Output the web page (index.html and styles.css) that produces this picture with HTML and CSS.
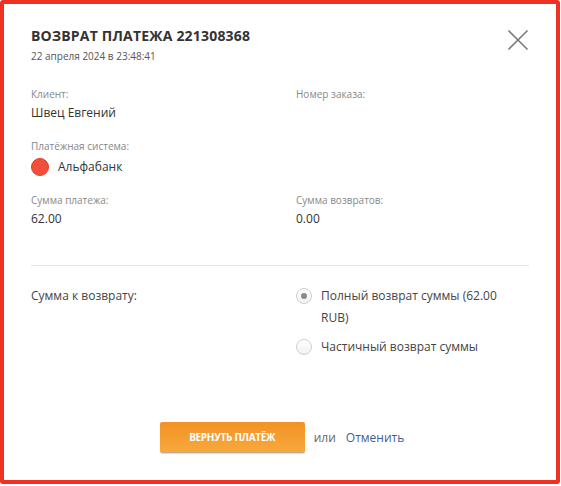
FILE: index.html
```html
<!DOCTYPE html>
<html lang="ru">
<head>
<meta charset="utf-8">
<title>Возврат платежа</title>
<link rel="stylesheet" href="styles.css">
</head>
<body>
<div class="modal">
  <div class="head">
    <div class="head-text">
      <h1 class="title">ВОЗВРАТ ПЛАТЕЖА 221308368</h1>
      <div class="date">22 апреля 2024 в 23:48:41</div>
    </div>
    <button class="close" aria-label="Закрыть">
      <svg width="22" height="22" viewBox="0 0 22 22"><path d="M1.5 1.5 L20.5 20.5 M20.5 1.5 L1.5 20.5" stroke="#7a7a7a" stroke-width="1.6" fill="none"/></svg>
    </button>
  </div>

  <div class="info">
    <div class="field">
      <div class="label">Клиент:</div>
      <div class="value">Швец Евгений</div>
    </div>
    <div class="field">
      <div class="label">Номер заказа:</div>
      <div class="value"></div>
    </div>
    <div class="field">
      <div class="label">Платёжная система:</div>
      <div class="value system"><span class="dot"></span>Альфабанк</div>
    </div>
    <div class="field"></div>
    <div class="field">
      <div class="label">Сумма платежа:</div>
      <div class="value">62.00</div>
    </div>
    <div class="field">
      <div class="label">Сумма возвратов:</div>
      <div class="value">0.00</div>
    </div>
  </div>

  <div class="divider"></div>

  <div class="refund">
    <div class="refund-label">Сумма к возврату:</div>
    <div class="options">
      <label class="option"><span class="radio checked"></span><span class="opt-text">Полный возврат суммы (62.00 RUB)</span></label>
      <label class="option"><span class="radio"></span><span class="opt-text">Частичный возврат суммы</span></label>
    </div>
  </div>

  <div class="actions">
    <button class="btn">ВЕРНУТЬ ПЛАТЁЖ</button>
    <span class="or">или</span>
    <a class="cancel" href="#">Отменить</a>
  </div>
</div>
</body>
</html>
```

FILE: styles.css
```css
* { box-sizing: border-box; }
html, body { margin: 0; padding: 0; background: #fff; }
body { font-family: "Open Sans", "Noto Sans", sans-serif; color: #333; }

.modal {
  width: 560px;
  height: 484px;
  border: 4px solid #ef3124;
  border-radius: 3px;
  padding: 23px 27px 0 27px;
  display: flex;
  flex-direction: column;
}

.head { display: flex; justify-content: space-between; align-items: flex-start; }
.title {
  margin: 0;
  font-size: 14px;
  line-height: 18px;
  font-weight: 700;
  color: #333;
  letter-spacing: 0.2px;
}
.date { font-size: 10px; line-height: 16px; color: #555; margin-top: 3px; }
.close {
  border: 0; background: none; padding: 0; margin: 2px 0 0 0;
  width: 22px; height: 22px; cursor: pointer;
}

.info {
  display: grid;
  grid-template-columns: 265px 1fr;
  row-gap: 17px;
  margin-top: 23px;
}
.label { font-size: 10px; line-height: 14px; color: #888; }
.value { font-size: 12px; line-height: 18px; color: #333; margin-top: 3px; min-height: 18px; }
.system { display: flex; align-items: center; margin-top: 5px; }
.dot {
  flex: none;
  width: 18px; height: 18px; border-radius: 50%;
  background: #f24e3c; border: 1px solid #e43a28;
  margin-right: 9px;
}

.divider { height: 1px; background: #e3e3e3; margin-top: 37px; }

.refund {
  display: grid;
  grid-template-columns: 265px 1fr;
  margin-top: 19px;
}
.refund-label { font-size: 12px; line-height: 22px; color: #444; }
.options { display: flex; flex-direction: column; gap: 7px; }
.option { display: flex; align-items: flex-start; font-size: 12px; line-height: 22px; color: #444; }
.opt-text { max-width: 185px; }
.radio {
  flex: none;
  width: 16px; height: 16px; border-radius: 50%;
  border: 1px solid #cfcfcf;
  background: linear-gradient(#fff, #f1f1f1);
  margin: 3px 9px 0 0;
  position: relative;
}
.radio.checked::after {
  content: "";
  position: absolute;
  left: 4px; top: 4px;
  width: 6px; height: 6px; border-radius: 50%;
  background: #8a8a8a;
}

.actions {
  display: flex; align-items: center; justify-content: center;
  margin-top: 64px;
  padding-left: 4px;
}
.btn {
  width: 145px; height: 31px;
  border: 0; border-bottom: 1px solid #c8a88a;
  border-radius: 2px;
  background: linear-gradient(#f39226, #f6a93c);
  color: #fff;
  font-family: inherit;
  font-size: 10px; font-weight: 700; letter-spacing: -0.3px;
  box-shadow: 0 1px 1px rgba(0,0,0,0.15);
}
.or { font-size: 12px; color: #666; margin-left: 9px; }
.cancel { font-size: 12px; color: #3f5e96; text-decoration: none; margin-left: 10px; }
```
